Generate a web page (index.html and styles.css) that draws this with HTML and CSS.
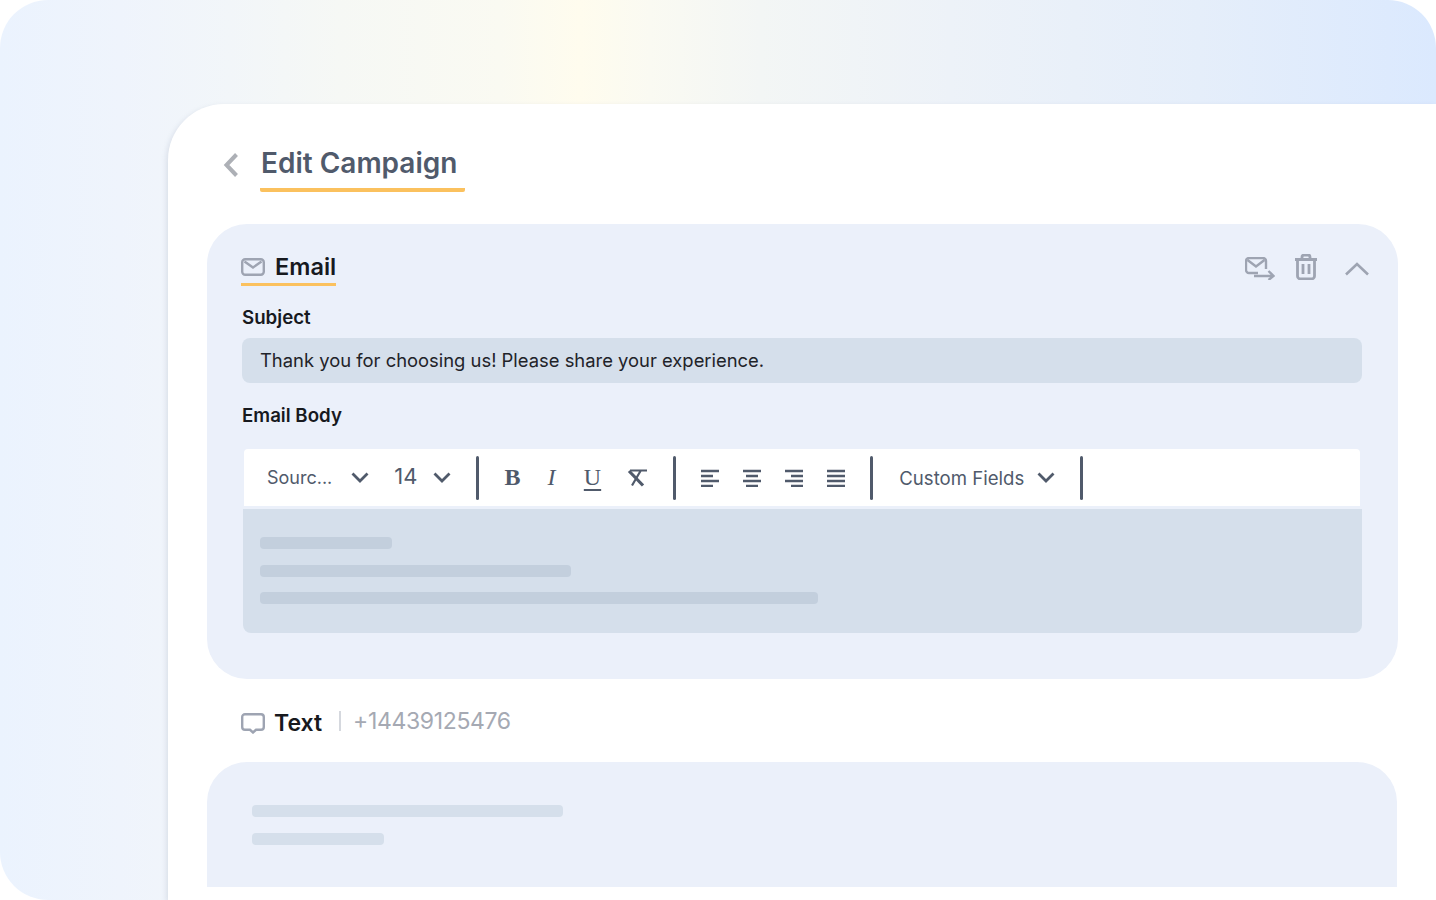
FILE: index.html
```html
<!DOCTYPE html>
<html lang="en">
<head>
<meta charset="utf-8">
<title>Edit Campaign</title>
<link rel="stylesheet" href="styles.css">
</head>
<body>
<div class="stage">
  <main class="card">
    <header class="page-head">
      <svg class="back" width="16" height="26" viewBox="0 0 16 26"><path d="M13.500 2.500L3.500 13l10 10.500" fill="none" stroke="#adb0b6" stroke-width="4"/></svg>
      <h1 class="title">Edit Campaign</h1>
    </header>
    <section class="panel">
      <div class="panel-head">
        <div class="tab">
          <svg width="24" height="18" viewBox="0 0 24 18"><rect x="1.200" y="1.200" width="21.600" height="15.600" rx="3" fill="none" stroke="#9ea4b2" stroke-width="2.400"/><path d="M3.500 3.500l8.500 6 8.500-6" fill="none" stroke="#9ea4b2" stroke-width="2.400"/></svg>
          <span>Email</span>
        </div>
        <div class="actions">
          <svg width="30" height="23" viewBox="0 0 30 23"><path d="M13 16H4a3 3 0 0 1-3-3V4a3 3 0 0 1 3-3h14a3 3 0 0 1 3 3v8" fill="none" stroke="#9ea4b2" stroke-width="2.400"/><path d="M2.500 3l8.500 6.500L19.500 3" fill="none" stroke="#9ea4b2" stroke-width="2.400"/><path d="M9 19h19M23.500 14l5 5-5 4" fill="none" stroke="#9ea4b2" stroke-width="2.400"/></svg>
          <svg class="trash" width="24" height="26" viewBox="0 0 24 26"><path d="M1 5.500h22M8 5V3a2 2 0 0 1 2-2h4a2 2 0 0 1 2 2v2M3.500 5.500V22a3 3 0 0 0 3 3h11a3 3 0 0 0 3-3V5.500M9 10v10M15 10v10" fill="none" stroke="#9ea4b2" stroke-width="2.800"/></svg>
          <svg class="collapse" width="26" height="14" viewBox="0 0 26 14"><path d="M2 12.500L13 2l11 10.500" fill="none" stroke="#9ea4b2" stroke-width="2.600"/></svg>
        </div>
      </div>
      <label class="field-label">Subject</label>
      <div class="subject">Thank you for choosing us! Please share your experience.</div>
      <label class="field-label body-label">Email Body</label>
      <div class="editor">
        <div class="toolbar">
          <span class="tool-text font-name">Sourc...</span>
          <svg class="chev" width="18" height="11" viewBox="0 0 18 11"><path d="M1.500 1.500L9 9l7.500-7.500" fill="none" stroke="#505a6b" stroke-width="2.800"/></svg>
          <span class="tool-text size">14</span>
          <svg class="chev size-chev" width="18" height="11" viewBox="0 0 18 11"><path d="M1.500 1.500L9 9l7.500-7.500" fill="none" stroke="#505a6b" stroke-width="2.800"/></svg>
          <i class="sep"></i>
          <span class="fmt bold">B</span>
          <span class="fmt italic">I</span>
          <span class="fmt under">U</span>
          <svg class="clear" width="21" height="18" viewBox="0 0 21 18"><path d="M3 1.500h17M5 16.500L13.500 2" fill="none" stroke="#505a6b" stroke-width="2.200"/><path d="M2 2l14 14.500" fill="none" stroke="#505a6b" stroke-width="3.200"/></svg>
          <i class="sep sep-b"></i>
          <svg class="align" width="18" height="18" viewBox="0 0 18 18"><path d="M0 2h18M0 7h12M0 12h18M0 17h12" stroke="#505a6b" stroke-width="2.400"/></svg>
          <svg class="align" width="18" height="18" viewBox="0 0 18 18"><path d="M0 2h18M3 7h12M0 12h18M3 17h12" stroke="#505a6b" stroke-width="2.400"/></svg>
          <svg class="align" width="18" height="18" viewBox="0 0 18 18"><path d="M0 2h18M6 7h12M0 12h18M6 17h12" stroke="#505a6b" stroke-width="2.400"/></svg>
          <svg class="align" width="18" height="18" viewBox="0 0 18 18"><path d="M0 2h18M0 7h18M0 12h18M0 17h18" stroke="#505a6b" stroke-width="2.400"/></svg>
          <i class="sep"></i>
          <span class="tool-text fields">Custom Fields</span>
          <svg class="chev fields-chev" width="18" height="11" viewBox="0 0 18 11"><path d="M1.500 1.500L9 9l7.500-7.500" fill="none" stroke="#505a6b" stroke-width="2.800"/></svg>
          <i class="sep"></i>
        </div>
        <div class="editor-body">
          <div class="bar w132"></div>
          <div class="bar w311"></div>
          <div class="bar w558"></div>
        </div>
      </div>
    </section>
    <div class="text-row">
      <svg class="chat" width="24" height="21" viewBox="0 0 24 21"><path d="M4 1.200h16a2.800 2.800 0 0 1 2.800 2.800v10a2.800 2.800 0 0 1-2.800 2.800h-5l-3 2.700-3-2.700H4a2.800 2.800 0 0 1-2.800-2.800V4A2.800 2.800 0 0 1 4 1.200z" fill="none" stroke="#9ea4b2" stroke-width="2.400"/></svg>
      <span class="text-name">Text</span>
      <i class="thin"></i>
      <span class="phone">+14439125476</span>
    </div>
    <section class="panel-lower">
      <div class="bar w311"></div>
      <div class="bar w132"></div>
    </section>
  </main>
</div>
</body>
</html>
```
FILE: styles.css
```css
* { box-sizing: border-box; }
html, body { margin: 0; height: 900px; overflow: hidden; background: #fff; }
body { font-family: "Inter", "Liberation Sans", sans-serif; }
.stage {
  width: 1436px; height: 900px;
  padding: 104px 0 0 168px;
  border-radius: 48px 48px 0 48px;
  background: linear-gradient(90deg, #ebf3fe 0, #eff4fc 120px, #f2f6f9 230px, #f6f8f5 340px, #fafaf2 500px, #fffcee 580px, #fafaf2 650px, #f3f6f5 760px, #edf2f8 950px, #e5eefa 1200px, #dbe9fe 1436px);
  overflow: hidden;
}
.card {
  width: 1268px; height: 796px;
  background: #fff;
  border-radius: 56px 0 0 0;
  box-shadow: -2px 2px 5px rgba(120,135,160,.18);
  padding: 0 38px 0 39px;
}
.page-head { display: flex; align-items: flex-start; height: 120px; padding: 38px 0 0 16px; }
.back { margin-right: 21px; margin-top: 10px; }
.title {
  margin: 0; padding: 0 8px 4px 1px; font-size: 28px; line-height: 42px; font-weight: 600; color: #505a6b;
  border-bottom: 4px solid #fbc15e; border-radius: 0 0 2px 2px; white-space: nowrap;
}
.panel {
  height: 455px; background: #ebf0fa; border-radius: 40px;
  padding: 24px 36px 0 35px;
}
.panel-head { display: flex; justify-content: space-between; height: 38px; }
.tab { display: flex; align-items: center; gap: 10px; height: 38px; margin-left: -1px; padding-top: 2px; border-bottom: 3px solid #fbc15e; font-size: 23.500px; font-weight: 600; color: #17191e; }
.actions { display: flex; align-items: center; gap: 19px; margin: 3px -8px 0 0; }
.trash { margin-top: -3px; }
.collapse { margin-left: 7px; }
.field-label { display: block; margin-top: 19px; font-size: 18.700px; line-height: 26px; font-weight: 600; color: #17191e; }
.body-label { margin-top: 20px; }
.subject {
  margin-top: 7px; height: 45px; border-radius: 8px; background: #d5dfeb;
  padding: 0 18px; font-size: 18.400px; line-height: 45px; color: #1f2329; white-space: nowrap;
}
.editor { margin-top: 20px; width: 1120px; }
.toolbar {
  margin-left: 2px; width: 1116px; height: 57px; background: #fff; border-radius: 4px 4px 0 0;
  display: flex; align-items: center; padding-left: 23px;
}
.tool-text { font-size: 18px; color: #505a6b; }
.chev { margin-left: 19px; }
.size { font-size: 22px; margin-left: 25px; margin-top: -4px; }
.size-chev { margin-left: 16px; }
.sep { width: 3px; height: 44px; background: #505a6b; border-radius: 2px; margin-left: 25px; }
.fmt { font-family: "Liberation Serif", serif; font-size: 24px; color: #505a6b; width: 24px; text-align: center; margin-left: 15px; }
.sep + .fmt { margin-left: 21px; }
.bold { font-weight: 700; }
.italic { font-style: italic; }
.under { margin-left: 17px; text-decoration: underline; text-decoration-thickness: 1.500px; text-underline-offset: 4px; }
.clear { margin-left: 23px; }
.sep-b { margin-left: 25px; }
.align { margin-left: 24.200px; }
.fields { margin-left: 26px; font-size: 18.600px; }
.fields-chev { margin-left: 13px; }
.editor-body {
  margin-top: 3px; height: 124px; background: #d5dfeb; border-radius: 0 0 8px 8px;
  padding: 28px 17px 0;
  margin-left: 1px; width: 1119px;
}
.bar { height: 12px; background: #c3cfdd; border-radius: 4px; margin-bottom: 15.500px; }
.w132 { width: 132px; }
.w311 { width: 311px; }
.w558 { width: 558px; }
.text-row { display: flex; align-items: center; height: 83px; padding: 4px 0 0 34px; }
.chat { margin-top: 2px; }
.text-name { margin-left: 9px; font-size: 23px; font-weight: 600; color: #17191e; }
.thin { width: 2px; height: 20px; background: #d5d8de; margin: -4px 12px 0 17px; }
.phone { font-size: 23px; color: #a5a9b3; margin-top: -3px; letter-spacing: -.35px; }
.panel-lower {
  width: 1190px; height: 125px; background: #ebf0fa; border-radius: 40px 40px 0 0;
  padding: 43px 0 0 45px;
}
.panel-lower .bar { background: #d5dfeb; margin-bottom: 16px; }
```
